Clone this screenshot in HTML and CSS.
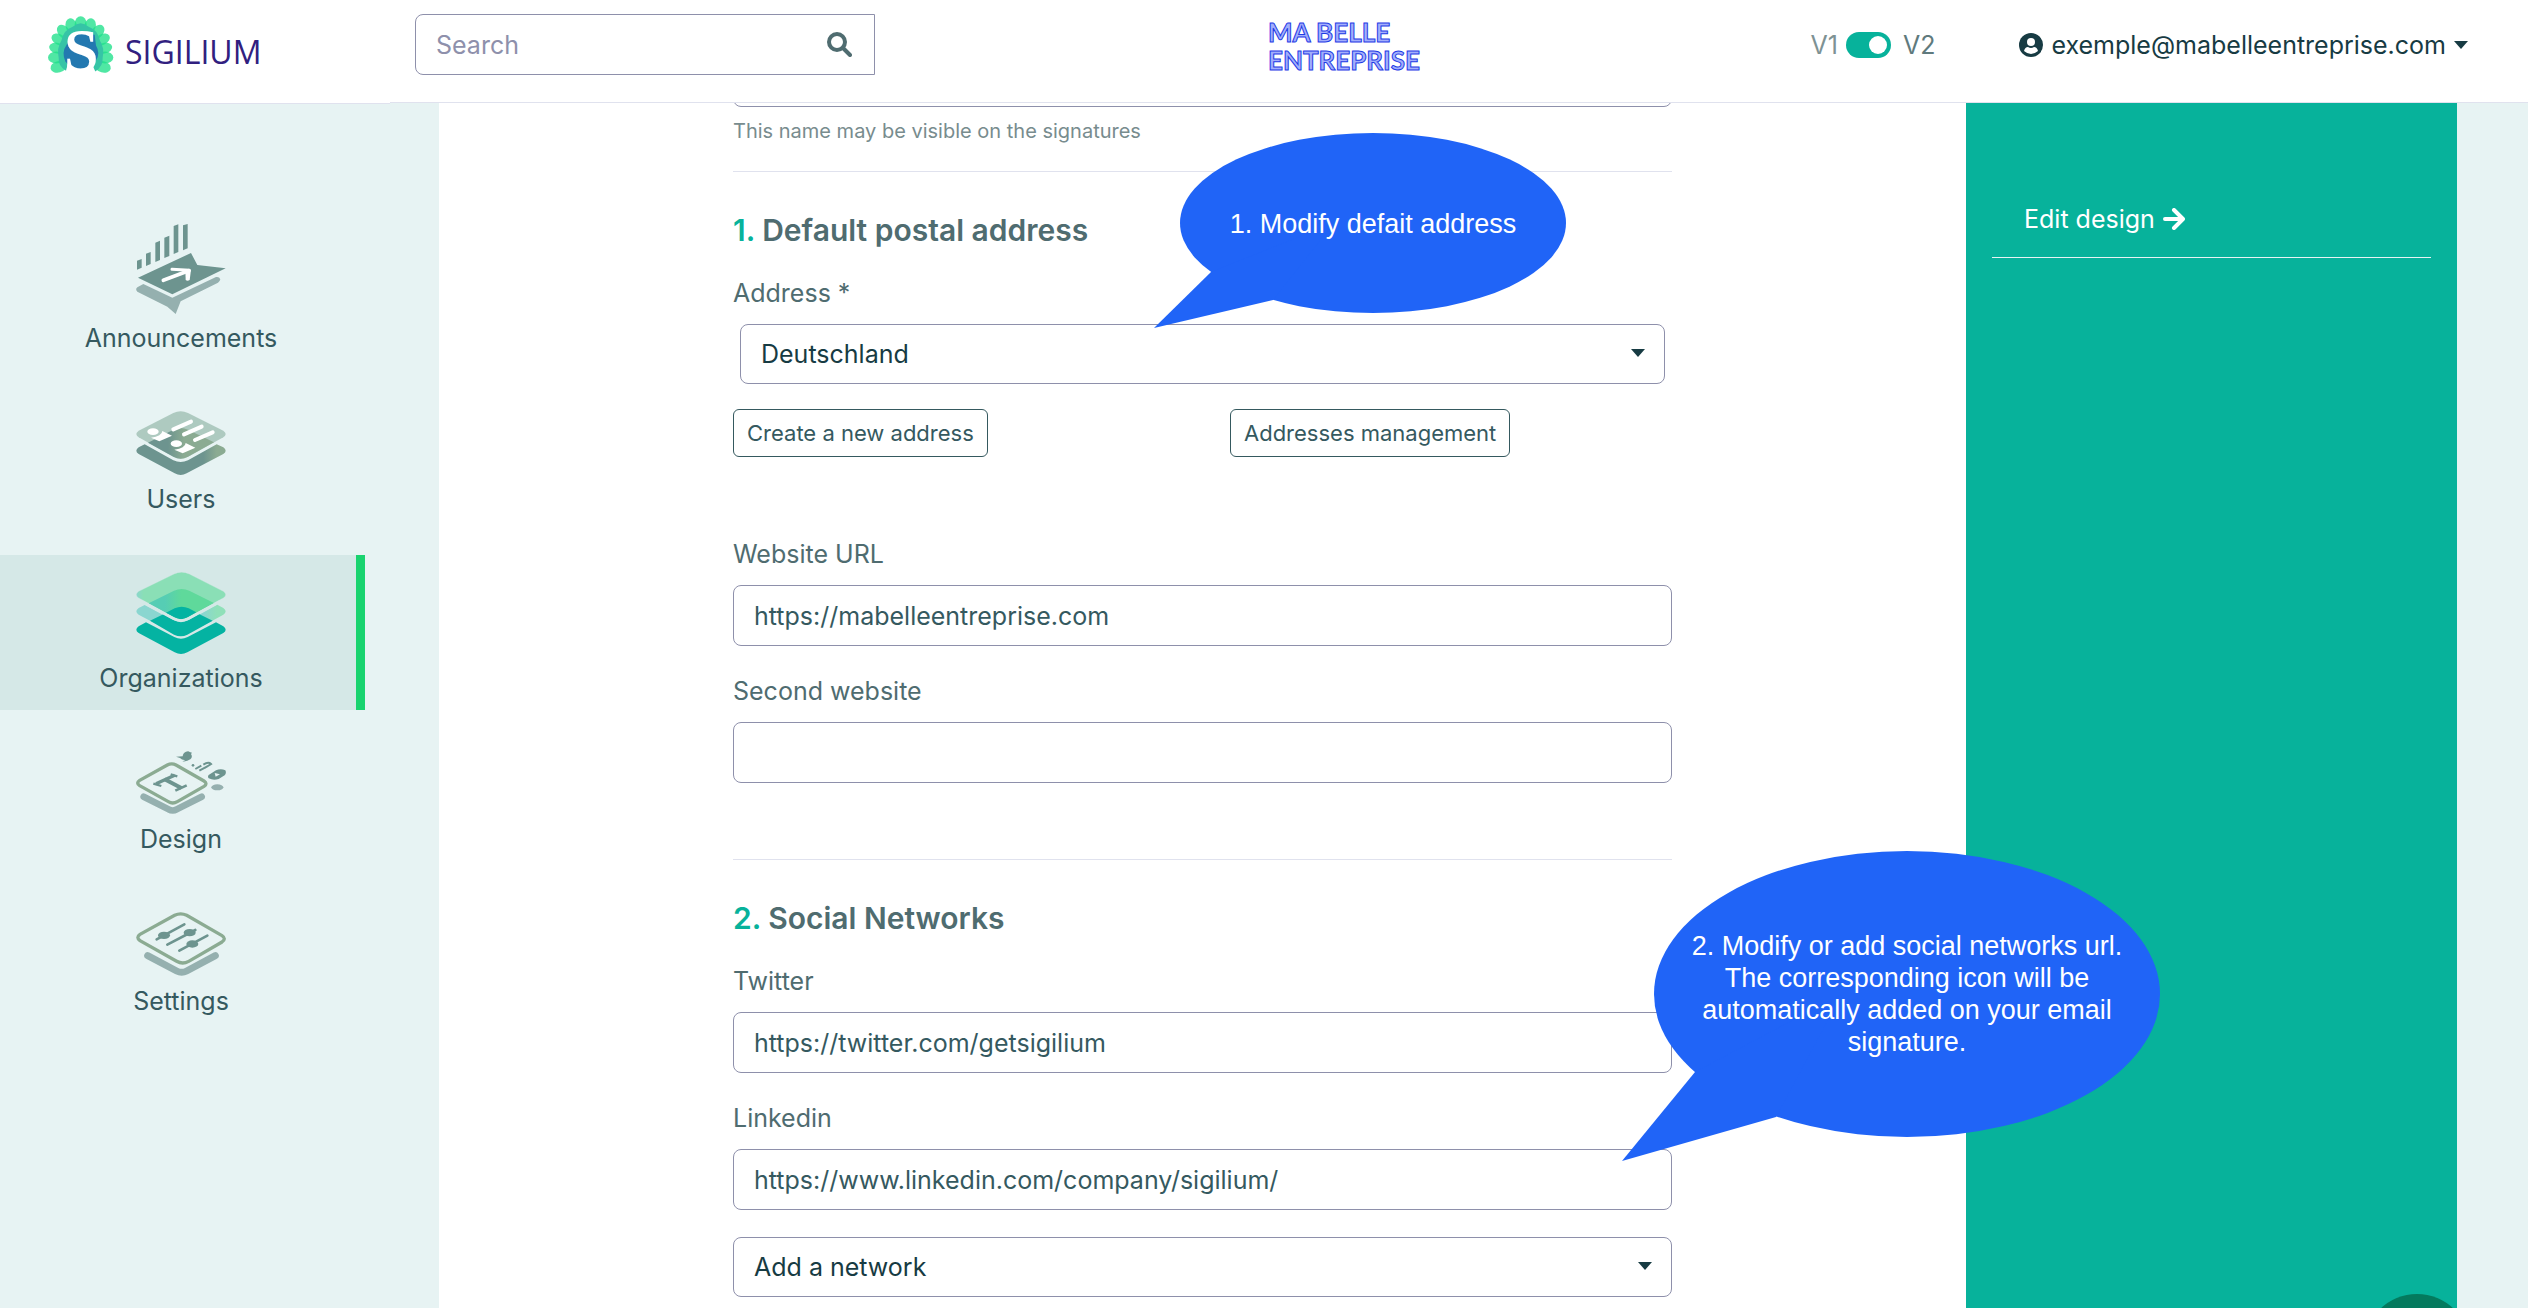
FILE: index.html
```html
<!doctype html>
<html lang="en">
<head>
<meta charset="utf-8">
<meta name="viewport" content="width=device-width, initial-scale=1">
<title>Sigilium - Organizations</title>
<link rel="stylesheet" href="styles.css">
</head>
<body>

<header class="topbar">

	<a class="logo" href="#">
		<svg class="logo-mark" viewBox="0 0 195 170" aria-hidden="true">
			<g fill="#1fe08a" fill-opacity="0.78">
				<ellipse cx="98" cy="24" rx="18" ry="24"/>
				<ellipse cx="70" cy="30" rx="17" ry="24" transform="rotate(-16 70 30)"/>
				<ellipse cx="126" cy="30" rx="17" ry="24" transform="rotate(16 126 30)"/>
				<ellipse cx="47" cy="47" rx="17" ry="24" transform="rotate(-42 47 47)"/>
				<ellipse cx="149" cy="47" rx="17" ry="24" transform="rotate(42 149 47)"/>
				<ellipse cx="33" cy="70" rx="16" ry="24" transform="rotate(-62 33 70)"/>
				<ellipse cx="163" cy="70" rx="16" ry="24" transform="rotate(62 163 70)"/>
				<ellipse cx="27" cy="96" rx="16" ry="24" transform="rotate(-76 27 96)"/>
				<ellipse cx="169" cy="96" rx="16" ry="24" transform="rotate(76 169 96)"/>
				<ellipse cx="25" cy="124" rx="25" ry="18"/>
				<ellipse cx="171" cy="124" rx="25" ry="18"/>
				<ellipse cx="32" cy="152" rx="25" ry="17" transform="rotate(-14 32 152)"/>
				<ellipse cx="164" cy="152" rx="25" ry="17" transform="rotate(14 164 152)"/>
			</g>
			<path fill="#36c4a6" d="M54 164 Q30 150 32 125 Q26 95 40 74 Q48 40 74 32 Q98 10 122 32 Q148 40 156 74 Q170 95 164 125 Q166 150 142 166 L130 140 L60 140 Z"/>
			<path fill="#2378b0" d="M98 52 L140 56 L144 88 Q158 112 144 132 Q128 160 98 160 Q70 160 52 136 Q40 108 56 86 Q68 56 98 52 Z"/>
			<text class="logo-s" x="100" y="165" text-anchor="middle">S</text>
		</svg>
		<span class="logo-name">SIGILIUM</span>
	</a>

	<form class="search">
		<input type="search" placeholder="Search" aria-label="Search">
		<button type="button" aria-label="Run search">
			<svg viewBox="0 0 25 25" fill="none" stroke="#4f6c70" stroke-width="4" stroke-linecap="round" aria-hidden="true">
				<circle cx="10" cy="10" r="8"/><path d="M16 16 L23 23"/>
			</svg>
		</button>
	</form>

	<div class="company">MA BELLE<br>ENTREPRISE</div>

	<div class="tools">
		<label class="version">
			<span class="v1">V1</span>
			<input type="checkbox" role="switch" checked>
			<span class="v2">V2</span>
		</label>

		<button class="account" type="button">
			<svg class="account-icon" viewBox="0 0 24 24" aria-hidden="true">
				<circle cx="12" cy="12" r="12" fill="#173b43"/>
				<circle cx="12" cy="9" r="4" fill="#fff"/>
				<path d="M5 18 Q6 14 9 14 Q12 16 15 14 Q18 14 19 18 Q12 24 5 18 Z" fill="#fff"/>
			</svg>
			exemple@mabelleentreprise.com
			<span class="caret"></span>
		</button>
	</div>

</header>

<div class="layout">

	<nav class="sidebar">

		<a class="item" href="#">
			<svg viewBox="0 0 270 270" aria-hidden="true">
				<path fill="#6d948f" d="M3 110 L17 105 V131 L3 137 Z M30 89 L44 84 V120 L30 126 Z M58 56 L72 50 V108 L58 114 Z M85 41 L100 35 V96 L85 102 Z M113 6 L127 1 V84 L113 90 Z M141 4 L155 0 V73 L141 79 Z M6 161 L165 87 L184 123 L269 133 L109 211 Z"/>
				<path fill="#95b0af" d="M22 180 L109 221 L240 159 Q250 157 253 166 Q252 172 246 176 L134 232 L119 270 L94 248 L4 203 Q-3 195 4 190 Z"/>
				<path fill="none" stroke="#fff" stroke-width="11" stroke-linecap="round" d="M82 169 L158 140"/>
				<path fill="none" stroke="#fff" stroke-width="9" stroke-linecap="round" stroke-linejoin="round" d="M108 136 L160 139"/>
				<path fill="#fff" d="M148 138 L165 137 L161 168 Q154 173 149 168 Z"/>
			</svg>
			Announcements
		</a>

		<a class="item" href="#">
			<svg viewBox="0 0 270 192" aria-hidden="true">
				<defs>
					<linearGradient id="users"><stop offset="0.3" stop-color="#6d948f"/><stop offset="0.55" stop-color="#8bab92"/></linearGradient>
					<linearGradient id="usersBase"><stop offset="0.75" stop-color="#6d948f"/><stop offset="0.9" stop-color="#8bab92"/></linearGradient>
				</defs>
				<path fill="#aecac0" d="M112 6 Q134 -4 156 6 L262 59 Q276 69 262 79 L156 137 Q134 149 112 137 L8 79 Q-6 69 8 59 Z"/>
				<path fill="url(#users)" d="M36 95 L112 56 Q134 46 156 56 L234 94 L156 137 Q134 149 112 137 Z"/>
				<path fill="url(#usersBase)" d="M26 100 L112 148 Q134 158 156 148 L242 100 L262 109 Q276 119 262 129 L152 187 Q134 197 116 187 L8 129 Q-6 119 8 109 Z"/>
				<path stroke="#fff" stroke-width="12" stroke-linecap="round" d="M112 55 L165 32 M144 70 L197 47 M177 87 L230 64"/>
				<g fill="#fff">
					<ellipse cx="51" cy="62" rx="17" ry="10"/>
					<path d="M45 80 Q78 76 79 60 L108 74 L70 91 Z"/>
					<ellipse cx="121" cy="98" rx="17" ry="10"/>
					<path d="M115 116 Q148 112 149 96 L178 110 L140 127 Z"/>
				</g>
			</svg>
			Users
		</a>

		<a class="item active" href="#">
			<svg viewBox="0 0 270 246" aria-hidden="true">
				<defs>
					<linearGradient id="orgTop"><stop offset="0" stop-color="#8ad6cc"/><stop offset="0.08" stop-color="#8adfb6"/></linearGradient>
					<linearGradient id="orgMix"><stop offset="0.25" stop-color="#56cdb4"/><stop offset="0.5" stop-color="#5fd99b"/></linearGradient>
					<linearGradient id="orgMid"><stop offset="0.75" stop-color="#8ad6d0"/><stop offset="0.9" stop-color="#8fe0b9"/></linearGradient>
				</defs>
				<path fill="url(#orgMid)" d="M26 99 L114 146 Q135 157 156 146 L244 98 L262 108 Q276 118 262 128 L229 146 L135 192 L42 146 L8 128 Q-6 118 8 108 Z"/>
				<path fill="#04b3a2" d="M42 146 L82 127 L114 145 Q135 156 156 145 L189 126 L230 146 L154 188 Q135 197 114 188 Z"/>
				<path fill="url(#orgTop)" stroke="#d5e8e7" stroke-width="1" d="M114 6 Q137 -5 160 6 L262 58 Q276 68 262 78 L156 135 Q135 148 114 135 L8 78 Q-6 68 8 58 Z"/>
				<path fill="url(#orgMix)" d="M38 94 L114 56 Q137 46 160 56 L234 93 L156 135 Q135 148 114 135 Z"/>
				<path fill="#04b3a2" d="M90 122 L116 109 Q137 100 158 109 L181 121 L156 135 Q135 148 114 135 Z"/>
				<path fill="none" stroke="#d5e8e7" stroke-width="8" d="M20 90 L112 140 Q135 151 158 140 L252 88"/>
				<path fill="#04b3a2" d="M30 151 L115 195 Q135 205 155 195 L240 151 L262 163 Q276 173 262 183 L154 241 Q135 251 116 241 L8 183 Q-6 173 8 163 Z"/>
			</svg>
			Organizations
		</a>

		<a class="item" href="#">
			<svg viewBox="0 0 270 192" aria-hidden="true">
				<path fill="none" stroke="#8bab92" stroke-width="10" d="M94 42 Q107 35 120 42 L204 90 Q216 98 204 106 L124 152 Q110 160 97 152 L11 104 Q-1 96 11 88 Z"/>
				<path fill="none" stroke="#95b0af" stroke-width="20" stroke-linecap="round" d="M23 137 L98 175 Q110 182 122 175 L197 137"/>
				<g fill="none" stroke="#6d948f">
					<path stroke-width="10" d="M60 98 L116 73"/>
					<path stroke-width="12" d="M86 85 L136 111"/>
					<path stroke-width="8" d="M118 119 L152 103"/>
					<path stroke-width="7" d="M52 98 L76 105 M104 70 L124 76"/>
				</g>
				<path fill="#6d948f" d="M120 17 L140 16 Q141 5 150 2 Q158 -1 161 3 L168 5 L165 9 Q171 18 163 25 Q152 33 139 31 L148 28 Q136 27 132 21 Z"/>
				<path fill="none" stroke="#6d948f" stroke-width="6" d="M178 54 L196 44 M190 59 L214 46 M202 41 Q217 31 225 39 L206 51"/>
				<circle cx="171" cy="43" r="4" fill="#6d948f"/>
				<path fill="#6d948f" d="M218 72 L240 58 Q254 52 268 58 Q272 66 266 73 L248 84 Q232 89 218 82 Q214 77 218 72 Z"/>
				<path fill="#e7f3f3" d="M236 66 L252 70 L239 77 Z"/>
				<ellipse cx="244" cy="109" rx="18" ry="9" fill="#95b0af"/>
			</svg>
			Design
		</a>

		<a class="item" href="#">
			<svg viewBox="0 0 270 194" aria-hidden="true">
				<path fill="none" stroke="#8bab92" stroke-width="10" d="M116 10 Q134 1 152 10 L258 71 Q272 80 258 90 L158 148 Q140 158 122 148 L12 86 Q-1 76 12 67 Z"/>
				<path fill="none" stroke="#95b0af" stroke-width="21" stroke-linecap="round" d="M35 131 L122 177 Q137 185 152 177 L238 131"/>
				<path stroke="#6d948f" stroke-width="8" stroke-linecap="round" d="M62 82 L145 37 M94 98 L178 54 M130 116 L214 71"/>
				<g fill="#6d948f">
					<ellipse cx="84" cy="70" rx="18" ry="11"/>
					<ellipse cx="161" cy="62" rx="18" ry="11"/>
					<ellipse cx="169" cy="96" rx="18" ry="11"/>
				</g>
			</svg>
			Settings
		</a>

	</nav>

	<main class="content">
		<form class="organization">

			<input class="box" type="text" aria-label="Name" aria-describedby="nameHint">
			<p id="nameHint" class="hint">This name may be visible on the signatures</p>

			<hr>

			<h2><span>1.</span> Default postal address</h2>

			<label for="address">Address *</label>
			<div class="select inset">
				<select id="address"><option>Deutschland</option></select>
			</div>

			<div class="actions">
				<button type="button">Create a new address</button>
				<button type="button">Addresses management</button>
			</div>

			<label for="website">Website URL</label>
			<input id="website" class="box" type="text" value="https://mabelleentreprise.com">

			<label for="website2">Second website</label>
			<input id="website2" class="box last" type="text">

			<hr>

			<h2><span>2.</span> Social Networks</h2>

			<label for="twitter">Twitter</label>
			<input id="twitter" class="box" type="text" value="https://twitter.com/getsigilium">

			<label for="linkedin">Linkedin</label>
			<input id="linkedin" class="box" type="text" value="https://www.linkedin.com/company/sigilium/">

			<div class="select">
				<select aria-label="Add a network"><option>Add a network</option></select>
			</div>

			<div class="bubble bubble-address">
				<svg viewBox="0 0 412 195" aria-hidden="true">
					<ellipse cx="219" cy="90" rx="193" ry="90"/>
					<path d="M0 195 L57 139 L180 90 L119 167 Z"/>
				</svg>
				<p>1. Modify defait address</p>
			</div>

			<div class="bubble bubble-social">
				<svg viewBox="0 0 538 310" aria-hidden="true">
					<ellipse cx="285" cy="143" rx="253" ry="143"/>
					<path d="M0 310 L73 221 L220 143 L154 266 Z"/>
				</svg>
				<p>2. Modify or add social networks url.<br>The corresponding icon will be<br>automatically added on your email<br>signature.</p>
			</div>

		</form>
	</main>

	<aside class="panel">
		<a href="#">
			Edit design
			<svg viewBox="0 0 22 22" fill="none" stroke="#fff" stroke-width="4" stroke-linecap="round" stroke-linejoin="round" aria-hidden="true">
				<path d="M2 11 H19 M11 2 L20 11 L11 20"/>
			</svg>
		</a>
	</aside>

</div>

<button class="chat" type="button" aria-label="Open chat"></button>

</body>
</html>
```
FILE: styles.css
```css
* { box-sizing: border-box; }

:root { --dark: #173b43; --text: #35595f; --label: #4f6c70; --border: #8e90ab; --line: #e0e2ee; --teal: #07b29b; --pale: #e7f3f3; }

body { margin: 0; background: var(--pale); color: var(--text); font: 25px/36px Inter, "Liberation Sans", sans-serif; }

a { color: inherit; text-decoration: none; }

button, input, select { font: inherit; color: inherit; }
button { cursor: pointer; }

/* top bar */

.topbar { position: fixed; top: 0; left: 0; right: 0; z-index: 10; display: flex; align-items: flex-start;
	height: 103px; background: #fff; border-bottom: 1px solid var(--line); }

.logo { display: flex; align-items: center; gap: 12px; width: 390px; height: 104px; padding: 0 0 14px 48px;
	background: #fff; border-bottom: 1px solid var(--line); }
.logo-mark { width: 65px; height: 57px; overflow: visible; }
.logo-s { fill: #fff; font: bold 186px "Liberation Serif", serif; }
.logo-name { padding-top: 14px; color: #31207f; font: 500 32px/36px "Open Sans", sans-serif; }

.search { display: flex; width: 460px; height: 61px; margin: 14px 0 0 25px; border: 1px solid var(--border);
	border-radius: 8px 0 0 8px; }
.search input { flex: 1; min-width: 0; padding: 0 20px; background: none; border: 0; outline: 0; }
.search input::placeholder { color: var(--border); opacity: 1; }
.search button { padding: 0 22px; background: none; border: 0; line-height: 0; }
.search svg { width: 25px; height: 25px; }

.company { margin: 18px 0 0 393px; color: #a3affb; font: bold 26px/28px Lato, sans-serif;
	-webkit-text-stroke: 1px #1f3be6; }

.tools { display: flex; align-items: center; gap: 84px; height: 90px; margin-left: auto; padding-right: 60px; }
.version { display: flex; align-items: center; gap: 8px; }
.version input { appearance: none; width: 45px; height: 26px; margin: 0; padding: 4px; background: var(--teal); border-radius: 13px; }
.version input::before { content: ""; display: block; width: 18px; height: 18px; margin-left: auto;
	background: #fff; border-radius: 50%; }
.v1 { color: #7e9294; }
.v2 { padding-left: 4px; color: #5f7a7d; }

.account { display: flex; align-items: center; gap: 8px; padding: 0; background: none; border: 0; color: var(--dark); }
.account-icon { width: 24px; height: 24px; }
.caret { border: 7px solid transparent; border-top: 8px solid var(--dark); border-bottom: 0; }

/* columns */

.layout { display: flex; min-height: 100vh; padding-right: 71px; }

.sidebar { display: flex; flex: none; flex-direction: column; align-items: flex-start; gap: 24px; width: 439px; padding-top: 207px; }
.item { display: flex; flex-direction: column; align-items: center; gap: 6px; width: 365px; padding: 17px 3px 14px 0; }
.item svg { width: 90px; }
.item.active { padding-right: 0; padding-left: 6px; background: #d5e8e7; border-right: 9px solid #19d36f; }

.content { flex: 1; background: #fff; }

.panel { flex: none; width: 491px; padding: 198px 26px 0; background: var(--teal); color: #fff; }
.panel a { display: flex; align-items: center; gap: 8px; height: 60px; padding: 0 32px 18px; border-bottom: 1px solid #e7f3f3; }
.panel svg { width: 22px; height: 22px; }

/* form */

.organization { position: relative; z-index: 1; max-width: 939px; margin: 0 auto; padding: 46px 0 12px; }
.organization hr { margin: 0 0 38px; border: 0; border-top: 1px solid var(--line); }
.organization h2 { margin: 0 0 25px; color: var(--label); font-size: 30px; font-weight: 600; line-height: 40px; }
.organization h2 span { color: var(--teal); }
.organization label { display: block; margin-bottom: 13px; color: var(--label); }

.hint { margin: -18px 0 25px; color: #788c8e; font-size: 20px; line-height: 30px; }

.box { display: block; width: 100%; height: 61px; margin-bottom: 27px; padding: 0 20px; background: #fff;
	border: 1px solid var(--border); border-radius: 8px; }
.box.last { margin-bottom: 76px; }

.select { position: relative; }
.select select { appearance: none; width: 100%; height: 60px; padding: 0 20px; background: #fff; color: var(--dark);
	border: 1px solid var(--border); border-radius: 8px; }
.select::after { content: ""; position: absolute; top: 25px; right: 20px; pointer-events: none;
	border: 7px solid transparent; border-top: 8px solid var(--dark); border-bottom: 0; }
.select.inset { margin: 0 7px; }

.actions { display: grid; grid-template-columns: 1fr 1fr; justify-items: start; gap: 55px; margin: 25px 0 79px; }
.actions button { height: 48px; padding: 0 13px; background: #fff; border: 1px solid var(--text); border-radius: 6px; font-size: 22px; }

/* help bubbles lie over the form */

.bubble { position: absolute; display: flex; align-items: center; justify-content: center; color: #fff;
	font: 27px/32px "Liberation Sans", sans-serif; text-align: center; white-space: nowrap; }
.bubble svg { position: absolute; inset: 0; fill: #2064f7; }
.bubble p { position: relative; margin: 0; }
.bubble-address { top: 133px; left: 421px; width: 412px; height: 195px; padding: 0 0 14px 26px; }
.bubble-social { top: 851px; left: 889px; width: 538px; height: 310px; padding: 0 0 24px 32px; }

.chat { position: fixed; right: 58px; bottom: -92px; width: 106px; height: 106px; background: #047a5e; border: 0; border-radius: 50%; }
```
